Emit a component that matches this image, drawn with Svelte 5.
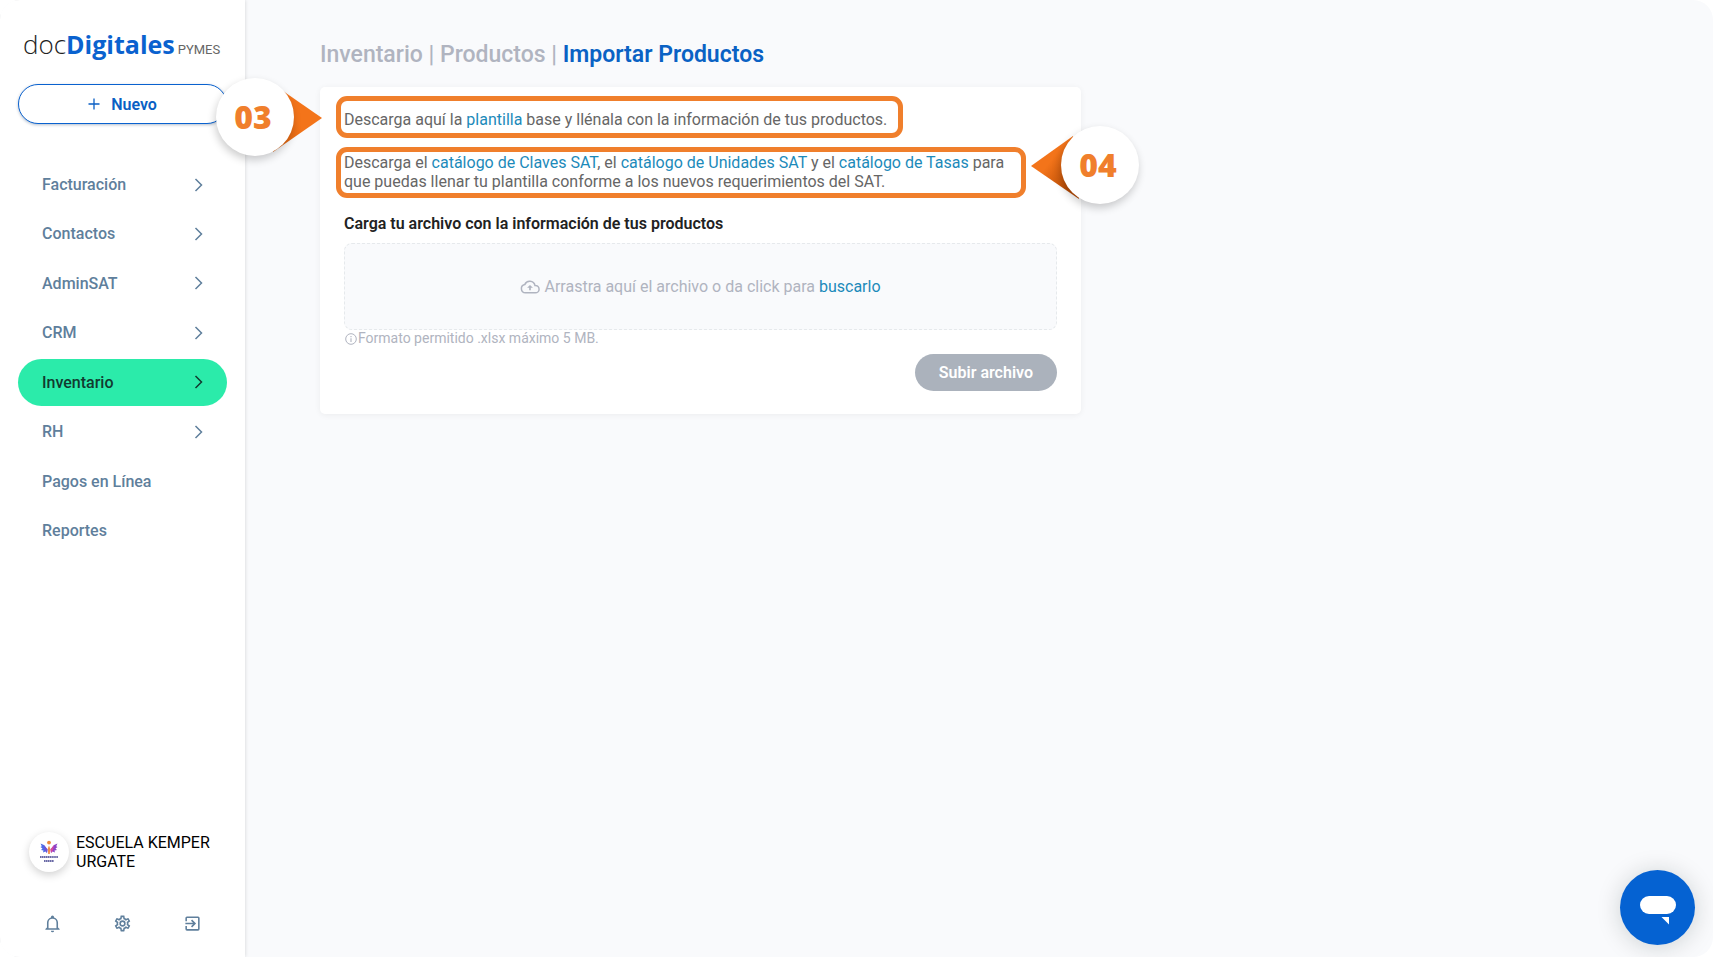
<script lang="ts">
  const items = [
    { label: 'Facturación', sub: true },
    { label: 'Contactos', sub: true },
    { label: 'AdminSAT', sub: true },
    { label: 'CRM', sub: true },
    { label: 'Inventario', sub: true, active: true },
    { label: 'RH', sub: true },
    { label: 'Pagos en Línea', sub: false },
    { label: 'Reportes', sub: false },
  ];
</script>

<div class="app">
  <aside class="sidebar">
    <a class="logo" href="#inicio"><span class="doc">doc</span><span class="dig">Digitales</span><span class="pymes">PYMES</span></a>

    <button class="new" type="button">
      <svg width="12" height="12" viewBox="0 0 12 12" aria-hidden="true"><path d="M6 .5v11M.5 6h11" stroke="currentColor" stroke-width="1.3" /></svg>
      Nuevo
    </button>

    <nav>
      {#each items as item}
        <a class="item" class:active={item.active} href="#menu">
          <span>{item.label}</span>
          {#if item.sub}
            <svg width="9" height="14" viewBox="0 0 9 14" aria-hidden="true"><path d="M1.500 1l6 6-6 6" fill="none" stroke="currentColor" stroke-width="1.500" /></svg>
          {/if}
        </a>
      {/each}
    </nav>

    <div class="account">
      <span class="avatar">
        <svg width="20" height="24" viewBox="0 0 20 24" aria-hidden="true">
          <circle cx="10" cy="2.600" r="1.900" fill="#ee8a3c" />
          <path d="M1.500 3.500l3.500 1.500 3.500 4.500-.5 3.500-1.500-1.500-2.500 1 .5-2-2.500-.5 1.500-1.500L1.500 7l1.300-.8z" fill="#4f6ae6" />
          <path d="M5 5l3.500 4.500-.5 3.500-2-3z" fill="#7a4fd0" />
          <path d="M18.500 3.500L15 5l-3.500 4.500.5 3.500 1.500-1.500 2.500 1-.5-2 2.500-.5-1.500-1.500 2-1.500-1.300-.8z" fill="#8e44c8" />
          <path d="M15 5l-3.500 4.500.5 3.500 2-3z" fill="#d8489a" />
          <path d="M10 5.500l1.200 3-.4 5.500H9.200l-.4-5.500z" fill="#f08a4a" />
          <path d="M1 17h18" stroke="#6a6aa6" stroke-width="2.200" stroke-dasharray="1.500 .4" />
          <path d="M5 21h10" stroke="#6a6aa6" stroke-width="2.200" stroke-dasharray="1.500 .4" />
        </svg>
      </span>
      <span class="company">ESCUELA KEMPER URGATE</span>
    </div>

    <div class="tools">
      <button type="button" aria-label="Notificaciones">
        <svg width="19" height="19" viewBox="0 0 24 24"><path fill="currentColor" d="M10 21h4a2 2 0 0 1-4 0m11-2v1H3v-1l2-2v-6c0-3.100 2.030-5.830 5-6.710V4a2 2 0 0 1 4 0v.29c2.970.88 5 3.610 5 6.710v6zm-4-8a5 5 0 0 0-10 0v7h10z" /></svg>
      </button>
      <button type="button" aria-label="Configuración">
        <svg width="19" height="19" viewBox="0 0 24 24"><path fill="currentColor" d="M12 8a4 4 0 0 1 4 4a4 4 0 0 1-4 4a4 4 0 0 1-4-4a4 4 0 0 1 4-4m0 2a2 2 0 0 0-2 2a2 2 0 0 0 2 2a2 2 0 0 0 2-2a2 2 0 0 0-2-2m-2 12c-.25 0-.46-.18-.5-.42l-.37-2.650c-.63-.25-1.170-.59-1.690-.99l-2.490 1.010c-.22.080-.49 0-.61-.22l-2-3.460a.493.493 0 0 1 .12-.64l2.110-1.660L4.500 12l.07-1l-2.110-1.630a.493.493 0 0 1-.12-.64l2-3.460c.12-.22.39-.31.61-.22l2.490 1c.52-.39 1.060-.73 1.690-.98l.37-2.650c.04-.24.25-.42.5-.42h4c.25 0 .46.18.5.42l.37 2.650c.63.25 1.170.59 1.690.98l2.490-1c.22-.09.49 0 .61.22l2 3.460c.13.22.07.49-.12.64L19.430 11l.07 1l-.07 1l2.110 1.630c.19.150.25.42.12.640l-2 3.460c-.12.22-.39.31-.61.22l-2.490-1c-.52.39-1.060.73-1.690.98l-.37 2.650c-.04.24-.25.42-.5.42zm1.250-18l-.37 2.610c-1.200.25-2.260.89-3.030 1.780L5.440 7.350l-.75 1.300L6.800 10.200a5.550 5.550 0 0 0 0 3.600l-2.120 1.560l.75 1.300l2.430-1.040c.77.880 1.820 1.520 3.010 1.760l.37 2.620h1.520l.37-2.610c1.190-.25 2.240-.89 3.010-1.770l2.430 1.040l.75-1.300l-2.120-1.550c.4-1.170.4-2.440 0-3.610l2.110-1.550l-.75-1.300l-2.410 1.040a5.420 5.420 0 0 0-3.030-1.770L12.750 4z" /></svg>
      </button>
      <button type="button" aria-label="Salir">
        <svg width="19" height="19" viewBox="0 0 24 24"><path fill="currentColor" d="M19 3H5a2 2 0 0 0-2 2v4h2V5h14v14H5v-4H3v4a2 2 0 0 0 2 2h14a2 2 0 0 0 2-2V5a2 2 0 0 0-2-2m-8.920 12.580L11.500 17l5-5l-5-5l-1.420 1.410L12.670 11H3v2h9.670z" /></svg>
      </button>
    </div>
  </aside>

  <main>
    <h1><a href="#inventario">Inventario</a> | <a href="#productos">Productos</a> | <strong>Importar Productos</strong></h1>

    <section class="card">
      <p class="marked one">Descarga aquí la <a href="#plantilla">plantilla</a> base y llénala con la información de tus productos.</p>
      <p class="marked two">Descarga el <a href="#claves">catálogo de Claves SAT</a>, el <a href="#unidades">catálogo de Unidades SAT</a> y el <a href="#tasas">catálogo de Tasas</a> para que puedas llenar tu plantilla conforme a los nuevos requerimientos del SAT.</p>
      <h2>Carga tu archivo con la información de tus productos</h2>
      <div class="drop">
        <svg width="20" height="20" viewBox="0 0 24 24" aria-hidden="true"><path d="M6.500 19a5 5 0 0 1-.8-9.900A6.500 6.500 0 0 1 18 10.200h.5a4.400 4.400 0 0 1 0 8.800z" fill="none" stroke="currentColor" stroke-width="1.800" /><path d="M12 9.500l3.500 3.500H13v3h-2v-3H8.500z" fill="currentColor" /></svg>
        <span>Arrastra aquí el archivo o da click para <a href="#buscar">buscarlo</a></span>
      </div>
      <div class="hint">
        <svg width="14" height="14" viewBox="0 0 14 14" aria-hidden="true"><circle cx="7" cy="7" r="5.300" fill="none" stroke="currentColor" /><path d="M7 6.200V10M7 4v1.200" stroke="currentColor" stroke-width="1.100" /></svg>
        <span>Formato permitido .xlsx máximo 5 MB.</span>
      </div>
      <button class="upload" type="button">Subir archivo</button>

      <div class="pin left">
        <svg width="72" height="66" viewBox="0 0 72 66" aria-hidden="true"><defs><linearGradient id="g3" x1="0" y1="1" x2="1" y2="0"><stop offset="0" stop-color="#d9600c" /><stop offset=".5" stop-color="#f3741a" /></linearGradient></defs><path d="M33 4L72 31 23 65z" fill="url(#g3)" /></svg>
        <span>03</span>
      </div>
      <div class="pin right">
        <svg width="72" height="66" viewBox="0 0 72 66" aria-hidden="true"><defs><linearGradient id="g4" x1="1" y1="1" x2="0" y2="0"><stop offset=".2" stop-color="#b94c05" /><stop offset=".6" stop-color="#f3741a" /></linearGradient></defs><path d="M42 1L0 31 48 64z" fill="url(#g4)" /></svg>
        <span>04</span>
      </div>
    </section>
  </main>

  <button class="chat" type="button" aria-label="Abrir chat">
    <svg width="36" height="30" viewBox="0 0 36 30"><rect x="0" y="0" width="36" height="18" rx="9" fill="#fff" /><path d="M21.500 21H29v7.500z" fill="#fff" /></svg>
  </button>
</div>

<style>
  :global(body) { background: #fff; }
  .app {
    display: flex;
    min-height: 100vh;
    overflow: hidden;
    background: #f9fafc;
    border-radius: 20px;
    font-family: Roboto, sans-serif;
    font-size: 16px;
    line-height: 19px;
    color: #666;
  }
  a { color: inherit; text-decoration: none; }
  button { font: inherit; border: 0; background: none; padding: 0; cursor: pointer; }
  .sidebar {
    box-sizing: border-box;
    flex: 0 0 245px;
    min-width: 0;
    display: flex;
    flex-direction: column;
    padding: 24px 18px;
    background: #fff;
    box-shadow: 0 0 4px rgba(0, 0, 0, .16);
  }
  .logo {
    display: flex;
    align-items: baseline;
    padding-left: 5px;
    line-height: 40px;
    font-family: "Open Sans", sans-serif;
    font-size: 26px;
  }
  .doc { color: #222; font-weight: 300; }
  .dig { color: #0a62cf; font-size: 25px; font-weight: 700; }
  .pymes { margin-left: 3px; font-family: Roboto, sans-serif; font-size: 13px; }
  .new {
    display: flex;
    align-items: center;
    justify-content: center;
    gap: 11px;
    height: 40px;
    margin-top: 14px;
    border: 1px solid #0a62cf;
    border-radius: 20px;
    background: #fff;
    box-shadow: 0 1px 3px rgba(0, 40, 90, .3);
    color: #0a5fc4;
    font-weight: 600;
  }
  nav {
    display: flex;
    flex-direction: column;
    justify-content: space-between;
    min-height: 393px;
    margin-top: 37px;
  }
  .item {
    display: flex;
    align-items: center;
    justify-content: space-between;
    padding: 14px 24px;
    border-radius: 24px;
    color: #5f7f9c;
    font-weight: 500;
  }
  .active { background: #2bebaa; color: #123a30; }
  .account { display: flex; align-items: center; gap: 7px; margin-top: auto; padding-left: 11px; }
  .avatar {
    display: flex;
    align-items: center;
    justify-content: center;
    flex: 0 0 40px;
    height: 40px;
    border-radius: 50%;
    background: #fff;
    box-shadow: 0 3px 9px rgba(0, 0, 0, .18);
  }
  .company { color: #000; }
  .tools { display: flex; justify-content: space-around; margin-top: 42px; color: #5f7f9c; }
  .tools button { display: flex; color: inherit; }
  main { flex: 1; min-width: 0; padding: 41px 75px; }
  h1 { margin: 0; font-size: 23px; line-height: 28px; font-weight: 500; color: #b0b4c0; }
  h1 strong { font-weight: 600; color: #0a62c4; }
  .card {
    position: relative;
    box-sizing: border-box;
    max-width: 761px;
    margin-top: 18px;
    padding: 23px 24px;
    border-radius: 5px;
    background: #fff;
    box-shadow: 0 1px 6px rgba(0, 0, 0, .06);
  }
  p { margin: 0; }
  p a, .drop a { color: #1c8aba; }
  .marked { position: relative; width: fit-content; max-width: 676px; }
  .marked::after {
    content: "";
    position: absolute;
    border: 5px solid #f07f2c;
    border-radius: 11px;
    pointer-events: none;
  }
  .one::after { inset: -14px -16px -9px -8px; }
  .two { margin-top: 24px; }
  .two::after { inset: -6px -6px -7px -8px; }
  h2 { margin: 23px 0 10px; font-size: 16px; line-height: 19px; font-weight: 600; color: #222; }
  .drop {
    display: flex;
    align-items: center;
    justify-content: center;
    gap: 4px;
    height: 85px;
    border: 1px dashed #e6e9ec;
    border-radius: 8px;
    background: #f9fafc;
    color: #b0b4c0;
  }
  .hint { display: flex; align-items: center; font-size: 14px; line-height: 17px; color: #b0b4c0; }
  .upload {
    display: block;
    margin: 7px 0 0 auto;
    padding: 9px 24px;
    border-radius: 19px;
    background: #abb2bc;
    color: #fff;
    font-weight: 600;
  }
  .pin { position: absolute; }
  .pin span {
    position: absolute;
    box-sizing: border-box;
    width: 78px;
    height: 78px;
    padding-right: 4px;
    border-radius: 50%;
    background: #fff;
    box-shadow: -1px 4px 8px rgba(0, 0, 0, .2);
    color: #f07f2c;
    font-family: "Open Sans", sans-serif;
    font-size: 32px;
    line-height: 78px;
    text-align: center;
    font-weight: 800;
  }
  .left { left: -70px; top: 0; }
  .left span { right: 28px; top: -9px; }
  .right { right: -22px; top: 48px; }
  .right span { left: 30px; top: -9px; }
  .chat {
    position: fixed;
    right: 18px;
    bottom: 12px;
    display: grid;
    place-items: center;
    width: 75px;
    height: 75px;
    padding-top: 7px;
    border-radius: 50%;
    background: #0562d2;
    box-shadow: 0 2px 24px rgba(0, 30, 30, .18);
  }
</style>
